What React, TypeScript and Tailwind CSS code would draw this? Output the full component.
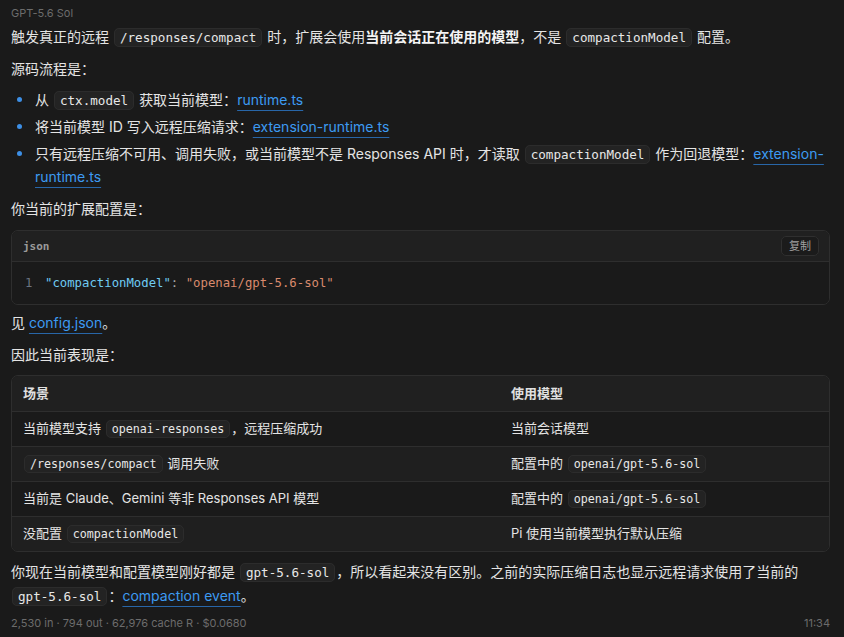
import React from "react";

const sans = {
  fontFamily: 'Inter, "Noto Sans CJK SC", "Noto Sans", sans-serif',
};
const mono = {
  fontFamily: '"DejaVu Sans Mono", "Liberation Mono", "Noto Sans CJK SC", monospace',
};

function Code({ children }: { children: React.ReactNode }) {
  return (
    <code
      style={mono}
      className="mx-[1px] rounded-[5px] border border-[#2c2c2c] bg-[#232323] px-[5px] py-[1px] text-[0.9em] leading-[16px] text-[#e8e8e8]"
    >
      {children}
    </code>
  );
}

function Link({ children }: { children: React.ReactNode }) {
  return (
    <a className="cursor-pointer text-[#3d9af2] underline decoration-[#2866a8] decoration-1 underline-offset-[5px]">
      {children}
    </a>
  );
}

function Bullet({ children }: { children: React.ReactNode }) {
  return (
    <li className="flex">
      <span className="flex h-[23px] w-[24px] shrink-0 items-center pl-[6px]">
        <span className="h-[5px] w-[5px] rounded-full bg-[#3d8fe6]" />
      </span>
      <span className="min-w-0">{children}</span>
    </li>
  );
}

const rows: { scene: React.ReactNode; model: React.ReactNode }[] = [
  {
    scene: (
      <>
        当前模型支持 <Code>openai-responses</Code>，远程压缩成功
      </>
    ),
    model: <>当前会话模型</>,
  },
  {
    scene: (
      <>
        <Code>/responses/compact</Code> 调用失败
      </>
    ),
    model: (
      <>
        配置中的 <Code>openai/gpt-5.6-sol</Code>
      </>
    ),
  },
  {
    scene: <>当前是 Claude、Gemini 等非 Responses API 模型</>,
    model: (
      <>
        配置中的 <Code>openai/gpt-5.6-sol</Code>
      </>
    ),
  },
  {
    scene: (
      <>
        没配置 <Code>compactionModel</Code>
      </>
    ),
    model: <>Pi 使用当前模型执行默认压缩</>,
  },
];

export default function App() {
  return (
    <div
      style={sans}
      className="min-h-[637px] w-full bg-[#1a1a1a] pl-[11px] pr-[14px] pt-[5px] text-[14px] leading-[23px] text-[#e4e4e4]"
    >
      <div className="text-[11px] leading-[16px] text-[#6c6c6c]">GPT-5.6 Sol</div>

      <p className="mt-[4px]">
        触发真正的远程 <Code>/responses/compact</Code> 时，扩展会使用
        <strong className="font-semibold text-[#f4f4f4]">当前会话正在使用的模型</strong>，不是{" "}
        <Code>compactionModel</Code> 配置。
      </p>

      <p className="mt-[9px]">源码流程是：</p>

      <ul className="mt-[8px] flex flex-col gap-[4px]">
        <Bullet>
          从 <Code>ctx.model</Code> 获取当前模型：<Link>runtime.ts</Link>
        </Bullet>
        <Bullet>
          将当前模型 ID 写入远程压缩请求：<Link>extension-runtime.ts</Link>
        </Bullet>
        <Bullet>
          只有远程压缩不可用、调用失败，或当前模型不是 Responses API 时，才读取{" "}
          <Code>compactionModel</Code> 作为回退模型：<Link>extension-runtime.ts</Link>
        </Bullet>
      </ul>

      <p className="mt-[9px]">你当前的扩展配置是：</p>

      <div className="mt-[10px] overflow-hidden rounded-[7px] border border-[#2e2e2e]">
        <div className="flex h-[31px] items-center justify-between border-b border-[#2e2e2e] bg-[#202020] pl-[11px] pr-[10px]">
          <span style={mono} className="text-[11px] font-bold text-[#9a9a9a]">
            json
          </span>
          <button className="flex h-[20px] items-center rounded-[5px] border border-[#2f2f2f] bg-[#1b1b1b] px-[7px] text-[11px] text-[#a0a0a0]">
            复制
          </button>
        </div>
        <div style={mono} className="flex h-[42px] items-center bg-[#1a1a1a] pl-[13px] text-[12.3px]">
          <span className="w-[20px] text-[#6b7380]">1</span>
          <span className="text-[#6fcbf3]">"compactionModel"</span>
          <span className="text-[#a8a8a8]">:&nbsp;</span>
          <span className="text-[#d98a6d]">"openai/gpt-5.6-sol"</span>
        </div>
      </div>

      <p className="mt-[6px]">
        见 <Link>config.json</Link>。
      </p>

      <p className="mt-[9px]">因此当前表现是：</p>

      <div className="mt-[9px] overflow-hidden rounded-[7px] border border-[#2e2e2e] text-[13px]">
        <table className="w-full border-collapse">
          <thead>
            <tr className="h-[35px] bg-[#202020] text-left">
              <th className="w-[488px] pl-[11px] font-semibold text-[#e0e0e0]">场景</th>
              <th className="pl-[11px] font-semibold text-[#e0e0e0]">使用模型</th>
            </tr>
          </thead>
          <tbody>
            {rows.map((r, i) => (
              <tr
                key={i}
                className={
                  "h-[35px] border-t border-[#2e2e2e] " +
                  (i % 2 === 1 ? "bg-[#1f1f1f]" : "bg-[#1a1a1a]")
                }
              >
                <td className="pl-[11px]">{r.scene}</td>
                <td className="pl-[11px]">{r.model}</td>
              </tr>
            ))}
          </tbody>
        </table>
      </div>

      <p className="mt-[8px] leading-[24px]">
        你现在当前模型和配置模型刚好都是 <Code>gpt-5.6-sol</Code>，所以看起来没有区别。之前的实际压缩日志也显示远程请求使用了当前的{" "}
        <Code>gpt-5.6-sol</Code>：<Link>compaction event</Link>。
      </p>

      <div className="mt-[7px] flex items-center justify-between text-[11px] leading-[16px] text-[#6c6c6c]">
        <span>2,530 in · 794 out · 62,976 cache R · $0.0680</span>
        <span>11:34</span>
      </div>
    </div>
  );
}
